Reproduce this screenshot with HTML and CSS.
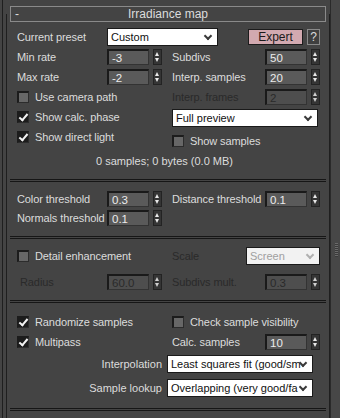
FILE: index.html
```html
<!DOCTYPE html>
<html>
  <head>
    <meta http-equiv="Content-Type" content="text/html;charset=UTF-8" />
    <title>Irradiance map</title>
    <link rel="stylesheet" href="styles.css">
  </head>
  <body>
    <div class="panel">
      <div class="rollout">
        <div class="title">
          <span class="title_minus">-</span>
          <span class="title_text">Irradiance map</span>
        </div>

        <!-- basic parameters -->
        <div class="group group_basic">
          <div class="row row_preset">
            <div class="cell">
              <span class="label label_left">Current preset</span>
              <div class="select select_preset"><span class="select_text">Custom</span><i class="chev"></i></div>
            </div>
            <div class="cell cell_end">
              <button class="btn btn_expert">Expert</button>
              <button class="btn btn_help">?</button>
            </div>
          </div>

          <div class="cols">
            <div class="col">
              <div class="cell">
                <span class="label label_left">Min rate</span>
                <div class="spin"><span class="field">-3</span><i class="arrows"></i></div>
              </div>
              <div class="cell">
                <span class="label label_left">Max rate</span>
                <div class="spin"><span class="field">-2</span><i class="arrows"></i></div>
              </div>
              <div class="cell">
                <label class="check"><i class="box"></i>Use camera path</label>
              </div>
              <div class="cell">
                <label class="check"><i class="box _on"></i>Show calc. phase</label>
              </div>
              <div class="cell">
                <label class="check"><i class="box _on"></i>Show direct light</label>
              </div>
            </div>

            <div class="col">
              <div class="cell">
                <span class="label label_right">Subdivs</span>
                <div class="spin"><span class="field">50</span><i class="arrows"></i></div>
              </div>
              <div class="cell">
                <span class="label label_right">Interp. samples</span>
                <div class="spin"><span class="field">20</span><i class="arrows"></i></div>
              </div>
              <div class="cell _off">
                <span class="label label_right">Interp. frames</span>
                <div class="spin"><span class="field">2</span><i class="arrows"></i></div>
              </div>
              <div class="cell cell_tall">
                <div class="select select_wide"><span class="select_text">Full preview</span><i class="chev"></i></div>
              </div>
              <div class="cell cell_samples">
                <label class="check"><i class="box"></i>Show samples</label>
              </div>
            </div>
          </div>

          <div class="info">0 samples; 0 bytes (0.0 MB)</div>
        </div>

        <div class="sep"></div>

        <!-- thresholds -->
        <div class="group group_thresh">
          <div class="cols">
            <div class="col">
              <div class="cell cell_short">
                <span class="label label_left">Color threshold</span>
                <div class="spin"><span class="field">0.3</span><i class="arrows"></i></div>
              </div>
              <div class="cell cell_short">
                <span class="label label_left">Normals threshold</span>
                <div class="spin"><span class="field">0.1</span><i class="arrows"></i></div>
              </div>
            </div>
            <div class="col">
              <div class="cell cell_short">
                <span class="label label_right">Distance threshold</span>
                <div class="spin"><span class="field">0.1</span><i class="arrows"></i></div>
              </div>
            </div>
          </div>
        </div>

        <div class="sep"></div>

        <!-- detail enhancement -->
        <div class="group group_detail">
          <div class="cols">
            <div class="col">
              <div class="cell cell_detail">
                <label class="check"><i class="box"></i>Detail enhancement</label>
              </div>
              <div class="cell cell_radius _off">
                <span class="label label_left label_indent">Radius</span>
                <div class="spin"><span class="field">60.0</span><i class="arrows"></i></div>
              </div>
            </div>
            <div class="col">
              <div class="cell cell_detail _off">
                <span class="label label_scale">Scale</span>
                <div class="select select_scale"><span class="select_text">Screen</span><i class="chev"></i></div>
              </div>
              <div class="cell cell_radius _off">
                <span class="label label_right">Subdivs mult.</span>
                <div class="spin"><span class="field">0.3</span><i class="arrows"></i></div>
              </div>
            </div>
          </div>
        </div>

        <div class="sep"></div>

        <!-- advanced -->
        <div class="group group_adv">
          <div class="cols">
            <div class="col">
              <div class="cell">
                <label class="check"><i class="box _on"></i>Randomize samples</label>
              </div>
              <div class="cell cell_short">
                <label class="check"><i class="box _on"></i>Multipass</label>
              </div>
            </div>
            <div class="col">
              <div class="cell">
                <label class="check"><i class="box"></i>Check sample visibility</label>
              </div>
              <div class="cell cell_short">
                <span class="label label_right">Calc. samples</span>
                <div class="spin"><span class="field">10</span><i class="arrows"></i></div>
              </div>
            </div>
          </div>

          <div class="pick">
            <span class="pick_label">Interpolation</span>
            <div class="select select_wide"><span class="select_text">Least squares fit (good/sm</span><i class="chev"></i></div>
          </div>
          <div class="pick">
            <span class="pick_label">Sample lookup</span>
            <div class="select select_wide"><span class="select_text">Overlapping (very good/fa</span><i class="chev"></i></div>
          </div>
        </div>

        <div class="sep"></div>
      </div>

      <div class="scroll"><i class="scroll_grip"></i></div>
    </div>
  </body>
</html>
```

FILE: styles.css
```css
html {
  font-size: 11px;
  font-family: "Liberation Sans", Arial, sans-serif;
}
body {
  margin: 0;
  width: 340px;
  height: 418px;
  overflow: hidden;
  background-color: #444444;
  color: #dcdcdc;
}

.panel {
  display: flex;
  height: 418px;
  margin-left: 2px;
  padding-left: 3px;
  border-left: 1px solid #1f1f1f;
}
.rollout {
  box-sizing: border-box;
  width: 325px;
  margin-top: 14px;
  padding: 0 3px;
  border-left: 1px solid #1f1f1f;
  border-right: 1px solid #1f1f1f;
}
.scroll {
  position: relative;
  width: 9px;
  border-left: 1px solid #2a2a2a;
  background-color: #474747;
}
.scroll_grip {
  position: absolute;
  left: 4px;
  top: 243px;
  width: 3px;
  height: 14px;
  background: repeating-linear-gradient(#6a6a6a 0 1px, #3a3a3a 1px 2px);
}

.title {
  display: flex;
  align-items: center;
  height: 16px;
  margin-top: -8px;
  border: 1px solid #8a8a8a;
  background-color: #444444;
  box-sizing: border-box;
  font-size: 12px;
}
.title_minus {
  width: 14px;
  padding-left: 4px;
}
.title_text {
  flex: 1;
  text-align: center;
  padding-right: 18px;
}

.group {
  padding-left: 7px;
}
.group_basic {
  padding-top: 5px;
}
.group_thresh {
  padding-top: 7px;
  padding-bottom: 9px;
}
.group_detail {
  padding-top: 5px;
  padding-bottom: 4px;
}
.group_adv {
  padding-top: 9px;
  padding-bottom: 9px;
}

.sep {
  height: 1px;
  border-top: 1px solid #161616;
  border-bottom: 1px solid #161616;
}

.row,
.cols {
  display: grid;
  grid-template-columns: 148px 148px;
  column-gap: 7px;
}
.col {
  display: flex;
  flex-direction: column;
}
.cell {
  display: flex;
  align-items: center;
  height: 20px;
}
.cell_end {
  justify-content: flex-end;
  gap: 4px;
}
.cell_tall {
  height: 22px;
}
.cell_samples {
  height: 24px;
}
.cell_short {
  height: 19px;
}
.cell_detail {
  height: 24px;
}
.cell_radius {
  height: 28px;
}

.label {
  flex: none;
  white-space: nowrap;
  letter-spacing: -0.1px;
}
.label_left {
  width: 90px;
}
.label_right {
  width: 93px;
}
.label_indent {
  padding-left: 3px;
  width: 87px;
}
.label_scale {
  width: 74px;
}
._off {
  color: #2a2a2a;
}

.spin {
  display: flex;
  flex: none;
  align-items: center;
  gap: 4px;
}
.field {
  box-sizing: border-box;
  width: 42px;
  height: 16px;
  padding: 1px 0 0 3px;
  border-top: 2px solid #1a1a1a;
  border-left: 2px solid #1a1a1a;
  border-right: 1px solid #333333;
  border-bottom: 1px solid #333333;
  background-color: #5a5a5a;
  color: #ececec;
  font-size: 11.5px;
  line-height: 12px;
}
._off .field {
  background-color: #4e4e4e;
  color: #2a2a2a;
}
.arrows {
  position: relative;
  box-sizing: border-box;
  width: 9px;
  height: 16px;
  border: 1px solid #232323;
  background-color: #353535;
}
.arrows::before,
.arrows::after {
  content: "";
  position: absolute;
  left: 1px;
  border-left: 2.5px solid transparent;
  border-right: 2.5px solid transparent;
}
.arrows::before {
  top: 2px;
  border-bottom: 4px solid #e8e8e8;
}
.arrows::after {
  bottom: 2px;
  border-top: 4px solid #e8e8e8;
}
._off .arrows::before {
  border-bottom-color: #cfcfcf;
}
._off .arrows::after {
  border-top-color: #cfcfcf;
}

.select {
  display: flex;
  flex: none;
  align-items: center;
  box-sizing: border-box;
  height: 18px;
  padding: 0 3px 0 3px;
  border: 1px solid #1a1a1a;
  background-color: #ffffff;
  color: #111111;
  font-size: 11px;
}
.select_text {
  flex: 1;
  min-width: 0;
  white-space: nowrap;
}
.select_preset {
  width: 111px;
}
.select_wide {
  width: 146px;
}
.select_scale {
  width: 74px;
  background-color: #f2f2f2;
  color: #a0a0a0;
}
.chev {
  position: relative;
  flex: none;
  width: 11px;
  height: 10px;
}
.chev::after {
  content: "";
  position: absolute;
  left: 2px;
  top: 1px;
  width: 4px;
  height: 4px;
  border-right: 2px solid #3a3a3a;
  border-bottom: 2px solid #3a3a3a;
  transform: rotate(45deg);
}
.select_scale .chev::after {
  border-color: #b0b0b0;
}

.btn {
  box-sizing: border-box;
  height: 16px;
  padding: 0;
  font-family: inherit;
  font-size: 12px;
  line-height: 13px;
}
.btn_expert {
  width: 55px;
  border: 1px solid #1c1c1c;
  background-color: #d2a9b0;
  color: #1a1a1a;
}
.btn_help {
  width: 13px;
  border: 1px solid #8a8a8a;
  background-color: #3f3f3f;
  color: #dcdcdc;
}

.check {
  display: flex;
  align-items: center;
  gap: 6px;
  white-space: nowrap;
  letter-spacing: -0.1px;
}
.box {
  position: relative;
  flex: none;
  box-sizing: border-box;
  width: 12px;
  height: 12px;
  border-top: 2px solid #1c1c1c;
  border-left: 2px solid #1c1c1c;
  border-right: 1px solid #2c2c2c;
  border-bottom: 1px solid #2c2c2c;
  background-color: #676767;
}
.box._on {
  background-color: #1c1c1c;
}
.box._on::after {
  content: "";
  position: absolute;
  left: 2px;
  top: -1px;
  width: 3px;
  height: 7px;
  border-right: 2px solid #f2f2f2;
  border-bottom: 2px solid #f2f2f2;
  transform: rotate(40deg);
}

.info {
  height: 16px;
  line-height: 16px;
  text-align: center;
  padding-right: 14px;
  margin-bottom: 10px;
}

.pick {
  display: flex;
  align-items: center;
  height: 22px;
  margin-left: -7px;
  margin-top: 2px;
}
.pick_label {
  width: 157px;
  text-align: right;
  padding-right: 5px;
  box-sizing: border-box;
  white-space: nowrap;
}
```
